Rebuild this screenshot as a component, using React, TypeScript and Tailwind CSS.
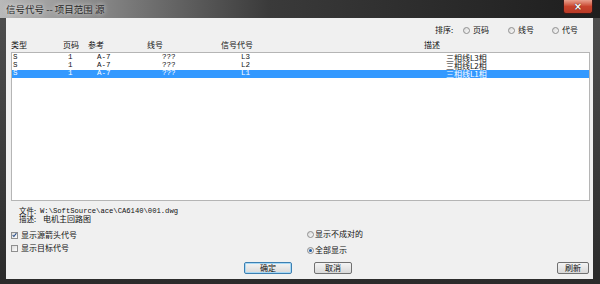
import React from "react";

// ── Data ──────────────────────────────────────────────────────────────────────

type Row = { type: string; page: string; ref: string; wire: string; code: string; desc: string };

const rows: Row[] = [
  { type: "S", page: "1", ref: "A-7", wire: "???", code: "L3", desc: "三相线L3相" },
  { type: "S", page: "1", ref: "A-7", wire: "???", code: "L2", desc: "三相线L2相" },
  { type: "S", page: "1", ref: "A-7", wire: "???", code: "L1", desc: "三相线L1相" },
];

const cjk = "font-['Noto_Sans_CJK_SC','Noto_Sans',sans-serif]";
const mono = "font-['Liberation_Mono','Noto_Sans_CJK_SC',monospace]";

// ── Small controls ────────────────────────────────────────────────────────────

const Radio = ({ checked = false }: { checked?: boolean }) => (
  <span className="w-[7px] h-[7px] rounded-full border border-[#8f8f8f] bg-gradient-to-br from-[#d8d8d8] to-[#fbfbfb] flex items-center justify-center shrink-0">
    {checked && <span className="w-[3px] h-[3px] rounded-full bg-[#1f5ea8]" />}
  </span>
);

const Check = ({ checked = false }: { checked?: boolean }) => (
  <span className="w-[7px] h-[7px] border border-[#8f8f8f] bg-gradient-to-br from-[#dcdcdc] to-[#fdfdfd] flex items-center justify-center shrink-0">
    {checked && (
      <svg width="6" height="6" viewBox="0 0 6 6">
        <path d="M0.8 3.2 L2.3 4.8 L5.3 0.8" fill="none" stroke="#2a4f8a" strokeWidth="1.3" />
      </svg>
    )}
  </span>
);

const Button = ({ label, primary = false, width }: { label: string; primary?: boolean; width: string }) => (
  <div
    className={[
      "h-[12px] rounded-[2px] border flex items-center justify-center bg-gradient-to-b from-[#f4f4f4] to-[#d9d9d9] text-[8px] leading-none text-[#111]",
      primary ? "border-[#3c7fb1] shadow-[inset_0_0_0_1px_#a7d8f5]" : "border-[#707070]",
      width,
    ].join(" ")}
  >
    {label}
  </div>
);

// ── App ───────────────────────────────────────────────────────────────────────

export default function App() {
  return (
    <div className={`w-[600px] h-[284px] flex flex-col bg-gradient-to-b from-[#505050] to-[#2b2b2b] overflow-hidden ${cjk}`}>
      {/* Title bar */}
      <div className="h-[18px] shrink-0 flex items-start bg-gradient-to-r from-[#b9b9b9] via-[#3a3a3a] via-45% to-[#1e1e1e]">
        <span className="pl-[6px] pt-[3px] text-[9.5px] leading-[12px] text-[#2a2a2a] [text-shadow:0_0_5px_rgba(255,255,255,0.9)]">
          信号代号 -- 项目范围 源
        </span>
        <div className="ml-auto mr-[7px] w-[30px] h-[14px] rounded-b-[3px] border border-t-0 border-[#3a1a1a] bg-gradient-to-b from-[#e8a08e] via-[#c8432c] to-[#b83a26] flex items-center justify-center">
          <span className="text-[10px] leading-none font-bold text-white font-['DejaVu_Sans',sans-serif] [text-shadow:0_0_1px_#000]">×</span>
        </div>
      </div>

      {/* Client area */}
      <div className="flex-1 ml-[6px] mr-[7px] mb-[5px] bg-[#f0f0f0] flex flex-col pt-[7px] pb-[5px] text-[#111]">
        {/* Sort */}
        <div className="h-[10px] flex items-center pl-[429px] text-[8px] leading-none">
          <span className="w-[28px]">排序:</span>
          <span className="w-[45px] flex items-center gap-[3px]"><Radio />页码</span>
          <span className="w-[44px] flex items-center gap-[3px]"><Radio />线号</span>
          <span className="flex items-center gap-[3px]"><Radio />代号</span>
        </div>

        {/* Header */}
        <div className="mt-[5px] h-[9px] flex items-center pl-[5px] text-[8px] leading-none">
          <span className="w-[52px]">类型</span>
          <span className="w-[25px]">页码</span>
          <span className="w-[59px]">参考</span>
          <span className="w-[74px]">线号</span>
          <span className="w-[203px]">信号代号</span>
          <span>描述</span>
        </div>

        {/* List */}
        <div className="mt-[3px] ml-[5px] mr-[3px] h-[149px] bg-white border border-[#b5b5b5] pt-[1px] overflow-hidden">
          {rows.map((r, i) => {
            const sel = i === rows.length - 1;
            return (
              <div
                key={i}
                className={[
                  "h-[8px] flex items-center pl-[1px] leading-none",
                  sel ? "bg-[#3399ff] text-white" : "text-[#111]",
                ].join(" ")}
              >
                <span className={`w-[55px] ${mono} text-[7.5px]`}>{r.type}</span>
                <span className={`w-[29px] ${mono} text-[7.5px]`}>{r.page}</span>
                <span className={`w-[65px] ${mono} text-[7.5px]`}>{r.ref}</span>
                <span className={`w-[79px] ${mono} text-[7.5px]`}>{r.wire}</span>
                <span className={`w-[205px] ${mono} text-[7.5px]`}>{r.code}</span>
                <span className="text-[8px] leading-[8px]">{r.desc}</span>
              </div>
            );
          })}
        </div>

        {/* File info */}
        <div className="mt-[6px] pl-[13px] flex flex-col text-[7.5px] leading-[8px]">
          <div className="flex items-center h-[8px]">
            <span className="w-[21px]">文件:</span>
            <span className={`${mono} text-[7.2px]`}>W:\SoftSource\ace\CA6140\001.dwg</span>
          </div>
          <div className="flex items-center h-[8px]">
            <span className="w-[24px]">描述:</span>
            <span className="text-[8px]">电机主回路图</span>
          </div>
        </div>

        {/* Options */}
        <div className="mt-[7px] h-[24px] flex text-[8px] leading-none">
          <div className="w-[301px] pl-[5px] pt-[1px] flex flex-col gap-[5px]">
            <span className="h-[8px] flex items-center gap-[3px]"><Check checked />显示源箭头代号</span>
            <span className="h-[8px] flex items-center gap-[3px]"><Check />显示目标代号</span>
          </div>
          <div className="flex flex-col gap-[8px]">
            <span className="h-[8px] flex items-center gap-[1px]"><Radio />显示不成对的</span>
            <span className="h-[8px] flex items-center gap-[1px]"><Radio checked />全部显示</span>
          </div>
        </div>

        {/* Buttons */}
        <div className="mt-[8px] flex pl-[238px] pr-[4px]">
          <Button label="确定" primary width="w-[48px]" />
          <div className="ml-[22px]">
            <Button label="取消" width="w-[38px]" />
          </div>
          <div className="ml-auto">
            <Button label="刷新" width="w-[32px]" />
          </div>
        </div>
      </div>
    </div>
  );
}
